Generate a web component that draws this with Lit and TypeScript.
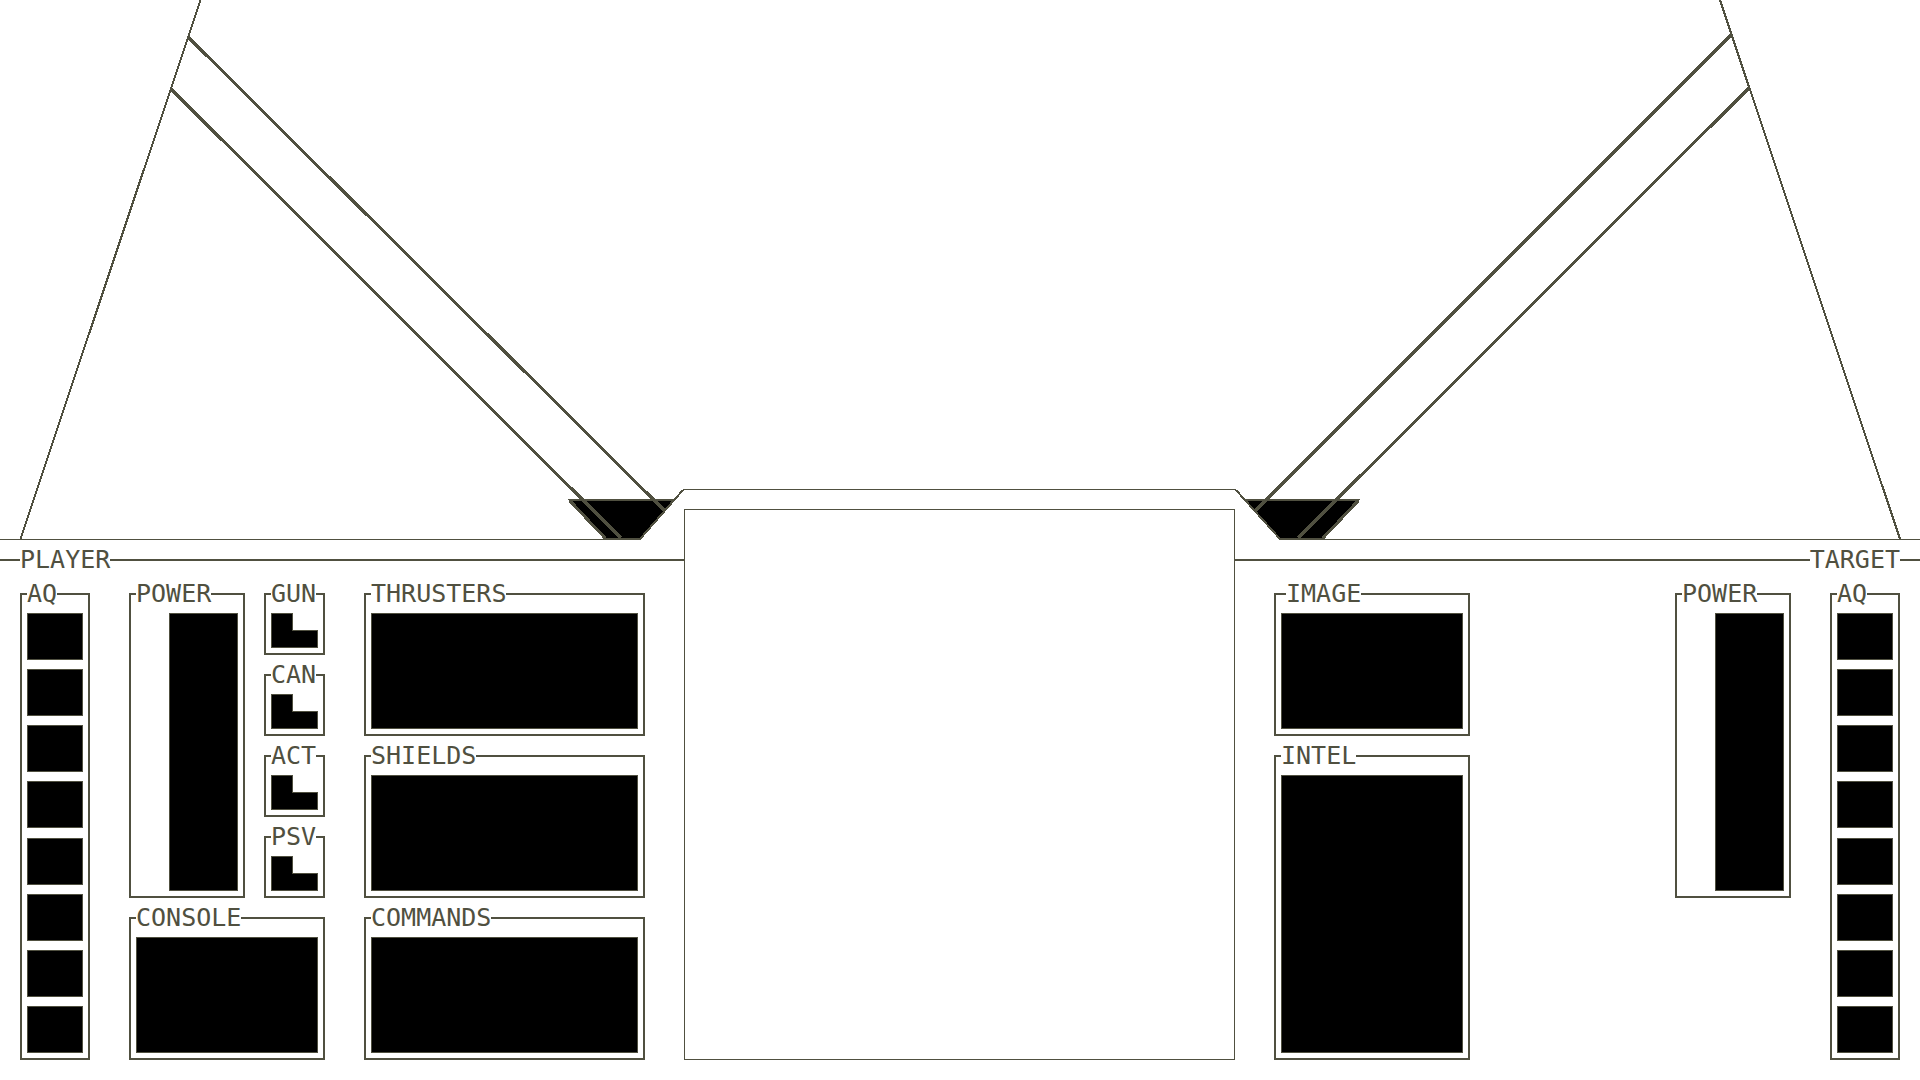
import { LitElement, html, css, svg } from "lit";
import type { TemplateResult } from "lit";
import { customElement } from "lit/decorators.js";

const SLOTS = ["GUN", "CAN", "ACT", "PSV"];
const ACQUISITION_CELLS = 8;

@customElement("app-root")
export class AppRoot extends LitElement {
  static styles = css`
    :host {
      --ink: #505040;
      --paper: #ffffff;
      --screen: #000000;
      display: block;
      color: var(--ink);
      background: var(--paper);
      font-family: "DejaVu Sans Mono", "Liberation Mono", monospace;
      font-size: 25px;
      line-height: 26px;
    }
    * {
      box-sizing: border-box;
    }
    h1,
    h2 {
      margin: 0;
      font: inherit;
    }
    .cockpit {
      display: grid;
      min-height: 100vh;
      grid-template-columns: 684fr 551px 685fr;
      grid-template-rows: minmax(0, 1fr) 30px 42px auto;
    }
    .canopy {
      grid-column: 1 / -1;
      grid-row: 1 / 3;
      display: block;
      width: 100%;
      height: 0;
      min-height: 100%;
      overflow: visible;
      fill: none;
      stroke: var(--ink);
      stroke-width: 2;
      shape-rendering: crispEdges;
    }
    .canopy .thin {
      stroke-width: 1;
    }
    .canopy .strut {
      stroke-width: 3;
    }
    .canopy .mount {
      fill: var(--screen);
    }
    .radar {
      grid-column: 2;
      grid-row: 2 / 5;
      margin-bottom: 20px;
      border: 1px solid var(--ink);
      background: var(--paper);
    }
    .rail {
      grid-row: 3;
      display: flex;
      align-items: center;
    }
    .rail::before,
    .rail::after {
      content: "";
      height: 2px;
      background: var(--ink);
      flex: 0 0 20px;
    }
    .rail.player {
      grid-column: 1;
    }
    .rail.target {
      grid-column: 3;
    }
    .rail.player::after,
    .rail.target::before {
      flex: 1;
    }
    .console {
      grid-row: 4;
      display: flex;
      gap: 39px;
      padding: 12px 20px 20px;
    }
    .console.player {
      grid-column: 1;
      padding-right: 39px;
    }
    .console.target {
      grid-column: 3;
      padding-left: 39px;
    }
    .stack {
      display: flex;
      flex-direction: column;
      gap: 19px;
    }
    .wide {
      flex: 1;
    }
    .medium {
      flex: 0 0 196px;
    }
    .systems {
      display: grid;
      flex: 0 0 196px;
      grid-template-columns: 116px 61px;
      gap: 19px;
    }
    .panel {
      display: flex;
      flex-direction: column;
      border: 2px solid var(--ink);
      padding: 0 5px 5px;
    }
    .panel > h2 {
      width: fit-content;
      margin: -14px 0 6px;
      background: var(--paper);
    }
    .panel.inset > h2 {
      margin-left: 5px;
    }
    .screen {
      flex: 1;
      min-height: 116px;
      border: 1px solid var(--ink);
      background: var(--screen);
    }
    .power {
      flex: 0 0 116px;
    }
    .systems .power {
      grid-row: 1 / 5;
    }
    .power .screen {
      width: 69px;
      min-height: 278px;
      align-self: flex-end;
    }
    .target .power {
      align-self: flex-start;
      margin-left: auto;
    }
    .log {
      grid-column: 1 / -1;
    }
    .intel {
      flex: 1;
    }
    .aq {
      flex: 0 0 70px;
    }
    .cells {
      flex: 1;
      display: flex;
      flex-direction: column;
      justify-content: space-between;
    }
    .cell {
      height: 47px;
      border: 1px solid var(--ink);
      background: var(--screen);
    }
    .slot svg {
      display: block;
      width: 47px;
      height: 35px;
      fill: var(--screen);
      stroke: var(--ink);
      shape-rendering: crispEdges;
    }
  `;

  private panel(title: string, kind = ""): TemplateResult {
    return html`<section class="panel ${kind}">
      <h2>${title}</h2>
      <div class="screen"></div>
    </section>`;
  }

  private acquisition(): TemplateResult {
    return html`<section class="panel aq">
      <h2>AQ</h2>
      <div class="cells">
        ${Array.from({ length: ACQUISITION_CELLS }, () => html`<div class="cell"></div>`)}
      </div>
    </section>`;
  }

  private slotPanel(title: string): TemplateResult {
    return html`<section class="panel slot">
      <h2>${title}</h2>
      <svg viewBox="0 0 47 35" aria-hidden="true">
        <path d="M.5 .5H21.5V17.5H46.5V34.5H.5Z" />
      </svg>
    </section>`;
  }

  private canopy(): TemplateResult {
    const struts = svg`
      <path d="M200.500 0L20.500 539M1720 0L1900 539" />
      <path class="strut" d="M188 37L665 511M171 89L621 538" />
      <path class="strut" d="M1731 35L1255 511M1749 88L1298 538" />`;
    return html`<svg
      class="canopy"
      viewBox="0 0 1920 539"
      preserveAspectRatio="none"
      aria-hidden="true"
    >
      <path class="mount" d="M570 500H674L640 539H606Z" />
      <path class="mount" d="M1245 500H1358L1322 539H1280Z" />
      <path class="strut" d="M570 501L605 538M1358 501L1323 538" />
      ${struts}
      <path d="M640 539L683 490M1236 490L1280 539" />
      <path class="thin" d="M0 539.5H640M683 489.5H1236M1280 539.5H1920" />
    </svg>`;
  }

  render() {
    return html`<main class="cockpit">
      ${this.canopy()}
      <header class="rail player"><h1>PLAYER</h1></header>
      <header class="rail target"><h1>TARGET</h1></header>
      <div class="radar"></div>
      <div class="console player">
        ${this.acquisition()}
        <div class="systems">
          ${this.panel("POWER", "power")}
          ${SLOTS.map((name) => this.slotPanel(name))}
          ${this.panel("CONSOLE", "log")}
        </div>
        <div class="stack wide">
          ${this.panel("THRUSTERS")} ${this.panel("SHIELDS")} ${this.panel("COMMANDS")}
        </div>
      </div>
      <div class="console target">
        <div class="stack medium">
          ${this.panel("IMAGE", "inset")} ${this.panel("INTEL", "intel")}
        </div>
        ${this.panel("POWER", "power")} ${this.acquisition()}
      </div>
    </main>`;
  }
}
